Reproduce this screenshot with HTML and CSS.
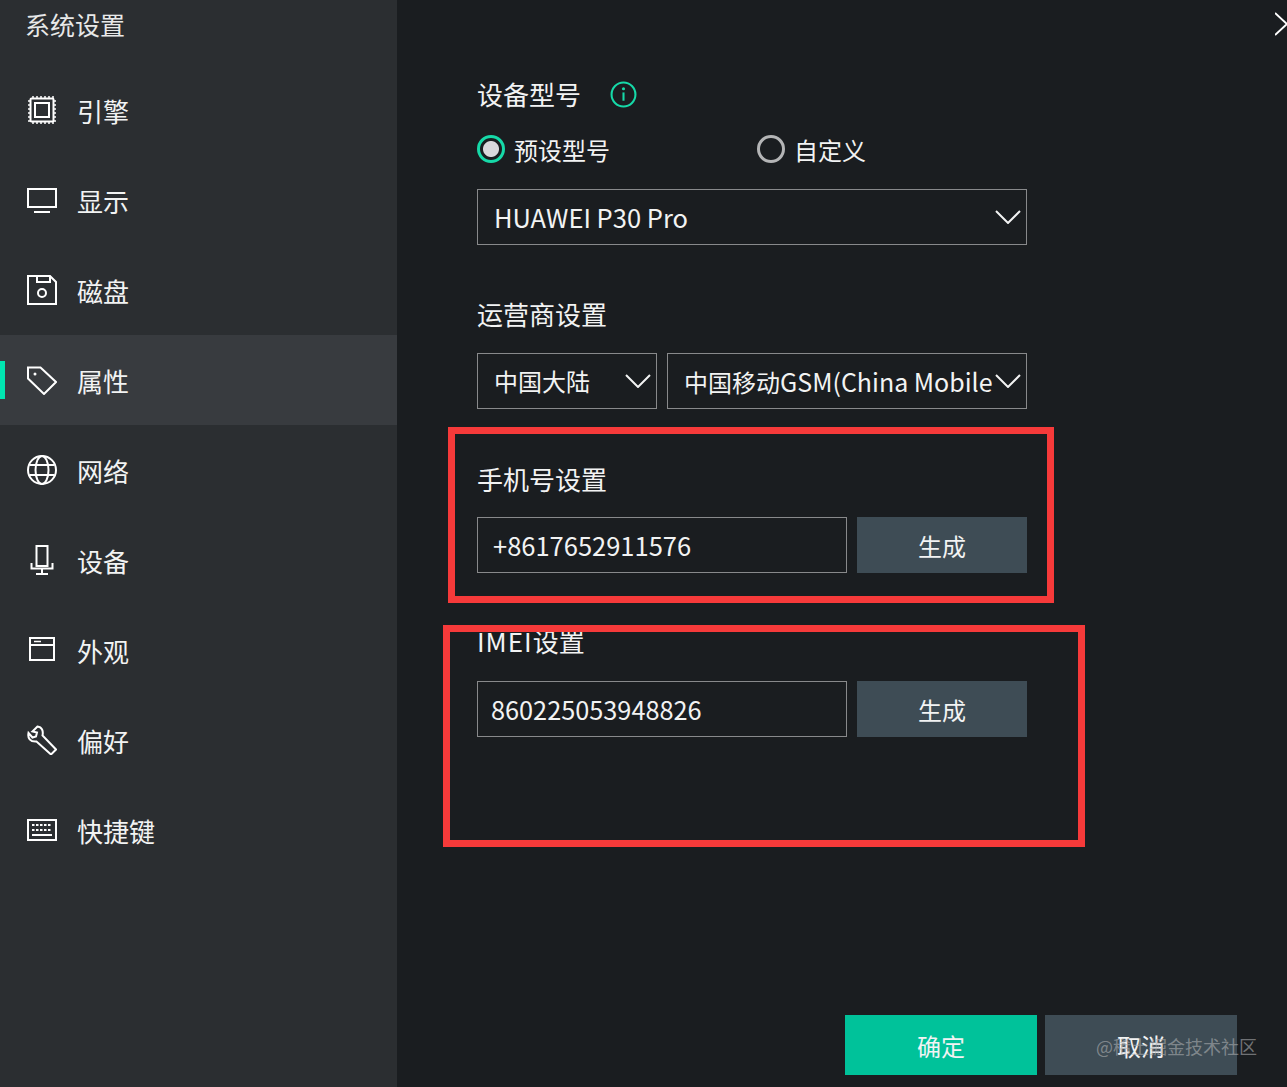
FILE: index.html
```html
<!DOCTYPE html>
<html lang="zh-CN">
<head>
<meta charset="utf-8">
<title>系统设置</title>
<link rel="stylesheet" href="styles.css">
</head>
<body>
<div class="app">
  <aside class="sidebar">
    <div class="side-title">系统设置</div>
    <nav class="nav">
      <div class="nav-item"><svg class="nav-icon" viewBox="0 0 30 30"><rect x="3.500" y="3.500" width="23" height="23" rx="1"/><rect x="8" y="8" width="14" height="14"/><path class="thin" d="M6 1v2M10 1v2M14 1v2M18 1v2M22 1v2M26 1v2M6 27v2M10 27v2M14 27v2M18 27v2M22 27v2M26 27v2M1 6h2M1 10h2M1 14h2M1 18h2M1 22h2M1 26h2M27 6h2M27 10h2M27 14h2M27 18h2M27 22h2M27 26h2"/></svg><span>引擎</span></div>
      <div class="nav-item"><svg class="nav-icon" viewBox="0 0 30 30"><rect x="1" y="4" width="28" height="18"/><path d="M7 27h16"/></svg><span>显示</span></div>
      <div class="nav-item"><svg class="nav-icon" viewBox="0 0 30 30"><path d="M1 1h22l6 6v22H1z"/><path d="M10 1v6h13V1"/><circle cx="15" cy="18" r="4"/></svg><span>磁盘</span></div>
      <div class="nav-item active"><svg class="nav-icon" viewBox="0 0 30 30"><path d="M1 2.500h12.500L29 17 17 29 1 13.500z"/><circle cx="8" cy="9" r="1.500" class="dot"/></svg><span>属性</span></div>
      <div class="nav-item"><svg class="nav-icon" viewBox="0 0 30 30"><circle cx="15" cy="15" r="14"/><ellipse cx="15" cy="15" rx="6.500" ry="14"/><path d="M2.500 10h25M2.500 20h25"/></svg><span>网络</span></div>
      <div class="nav-item"><svg class="nav-icon" viewBox="0 0 30 30"><rect x="9.500" y="1" width="11" height="20"/><path d="M4.500 18v5.500h21V18M15 23.500V29M9 29h12"/></svg><span>设备</span></div>
      <div class="nav-item"><svg class="nav-icon" viewBox="0 0 30 30"><rect x="3" y="3" width="24" height="22"/><path d="M3 10h24"/><path class="thin" d="M7 6.500h7"/></svg><span>外观</span></div>
      <div class="nav-item"><svg class="nav-icon" viewBox="0 0 30 30"><path d="M10.500 1.500l-5 5 4.500 1-1 4-3.500 1L1.500 8C.5 13 3 17 9.500 16.500L24 29.500l5-5-13.500-14C16.500 6 15 2 10.500 1.500z"/></svg><span>偏好</span></div>
      <div class="nav-item"><svg class="nav-icon" viewBox="0 0 30 30"><rect x="1" y="5" width="28" height="20"/><path d="M5 20h20"/><path class="dash" d="M5 10h20M5 15h20"/></svg><span>快捷键</span></div>
    </nav>
  </aside>

  <main class="panel">
    <svg class="close" viewBox="0 0 12 24"><path d="M0 1l12 11L0 23"/></svg>

    <section>
      <div class="label-row">
        <span class="label">设备型号</span>
        <svg class="info" viewBox="0 0 26 26"><circle cx="13" cy="13" r="11.500"/><path d="M13 11v8"/><circle class="info-dot" cx="13" cy="7.500" r="1.500"/></svg>
      </div>
      <div class="radios">
        <div class="radio-opt on"><i class="radio"></i><span>预设型号</span></div>
        <div class="radio-opt"><i class="radio"></i><span>自定义</span></div>
      </div>
      <div class="box select full"><span class="value">HUAWEI P30 Pro</span><svg class="chev" viewBox="0 0 26 14"><path d="M1 1l12 12L25 1"/></svg></div>
    </section>

    <section class="group-carrier">
      <div class="label">运营商设置</div>
      <div class="row">
        <div class="box select region"><span class="value cjk">中国大陆</span><svg class="chev" viewBox="0 0 26 14"><path d="M1 1l12 12L25 1"/></svg></div>
        <div class="box select carrier"><span class="value"><span class="cjk">中国移动</span>GSM(China Mobile)</span><svg class="chev" viewBox="0 0 26 14"><path d="M1 1l12 12L25 1"/></svg></div>
      </div>
    </section>

    <section class="group-phone">
      <div class="label">手机号设置</div>
      <div class="row">
        <div class="box field phone">+8617652911576</div>
        <div class="btn gen">生成</div>
      </div>
    </section>

    <section class="group-imei">
      <div class="label"><span class="latin-wide">IMEI</span>设置</div>
      <div class="row">
        <div class="box field imei">860225053948826</div>
        <div class="btn gen">生成</div>
      </div>
    </section>

    <footer class="actions">
      <div class="btn primary">确定</div>
      <div class="btn cancel">取消</div>
    </footer>

    <div class="mark mark-phone"></div>
    <div class="mark mark-imei"></div>
    <div class="watermark">@稀土掘金技术社区</div>
  </main>
</div>
</body>
</html>
```

FILE: styles.css
```css
* { box-sizing: border-box; }
html, body { margin: 0; height: 100%; overflow: hidden; }
body {
  font-family: "Noto Sans CJK SC", "Noto Sans", sans-serif;
  font-size: 26px;
  color: #f2f3f3;
  background: #1a1d20;
}
.app { display: flex; height: 1087px; }

.sidebar { width: 397px; flex: none; background: #2b2e31; }
.side-title { height: 65px; padding: 6px 0 0 25px; line-height: 36px; font-size: 25px; color: #e8e9e9; }
.nav-item {
  position: relative;
  display: flex;
  align-items: center;
  gap: 20px;
  height: 90px;
  padding-left: 27px;
  line-height: 36px;
}
.nav-item span { position: relative; top: 1px; }
.nav-item.active { background: #383b3f; }
.nav-item.active::before {
  content: "";
  position: absolute;
  left: 0;
  top: 26px;
  width: 5px;
  height: 38px;
  background: #00e5b0;
}
.nav-icon { width: 30px; height: 30px; flex: none; fill: none; stroke: #fff; stroke-width: 2; }
.nav-icon .thin { stroke-width: 1.500; }
.nav-icon .dot { fill: #fff; stroke: none; }
.nav-icon .dash { stroke-dasharray: 2.500 1.500; }

.panel { position: relative; flex: 1; display: flex; flex-direction: column; padding: 76px 50px 12px 80px; }
.close { position: absolute; right: 0; top: 12px; width: 12px; height: 24px; fill: none; stroke: #fff; stroke-width: 2; }

.label { line-height: 36px; color: #f2f3f3; }
.label-row { display: flex; align-items: center; gap: 29px; height: 36px; }
.info { width: 27px; height: 27px; fill: none; stroke: #16d9a8; stroke-width: 2; }
.info .info-dot { fill: #16d9a8; stroke: none; }
.latin-wide { letter-spacing: 1px; }

.radios { display: flex; margin-top: 19px; }
.radio-opt { display: flex; align-items: center; gap: 9px; line-height: 36px; width: 280px; font-size: 24px; }
.radio-opt span { position: relative; top: 1px; }
.radio {
  width: 28px;
  height: 28px;
  border-radius: 50%;
  border: 3px solid #b4b5b6;
}
.radio-opt.on .radio {
  border-color: #16d9a8;
  background: radial-gradient(circle, #d9d8dc 0 7.500px, transparent 8.500px);
}

.box { height: 56px; border: 1px solid #88898b; display: flex; align-items: center; line-height: 36px; font-size: 25.500px; }
.select { position: relative; padding: 0 5px 0 16px; gap: 2px; justify-content: space-between; overflow: hidden; }
.select .value { white-space: nowrap; overflow: hidden; flex: 1; min-width: 0; }
.cjk { font-size: 24px; }
.chev { width: 26px; height: 14px; flex: none; fill: none; stroke: #f2f3f3; stroke-width: 2; }
.full { width: 550px; margin-top: 22px; }
.row { display: flex; gap: 10px; }
.region { width: 180px; }
.carrier { width: 360px; font-size: 25px; }
.group-carrier { margin-top: 51px; }
.group-carrier .row { margin-top: 21px; }
.group-phone { margin-top: 52px; }
.group-phone .row { margin-top: 20px; }
.group-imei { margin-top: 50px; }
.group-imei .row { margin-top: 22px; }
.phone { width: 370px; padding-left: 15px; }
.imei { width: 370px; padding-left: 13px; font-size: 25.300px; }
.btn { display: flex; align-items: center; justify-content: center; color: #f2f3f3; font-size: 24px; }
.gen { width: 170px; height: 56px; background: #3e4c55; }

.actions { margin-top: auto; display: flex; justify-content: flex-end; gap: 8px; }
.actions .btn { width: 192px; height: 60px; }
.primary { background: #00c29a; }
.cancel { background: #3e4c55; }

.mark { position: absolute; border: 7px solid #f63a3a; pointer-events: none; }
.mark-phone { left: 51px; top: 427px; width: 606px; height: 176px; }
.mark-imei { left: 46px; top: 625px; width: 642px; height: 222px; }
.watermark {
  position: absolute;
  left: 699px;
  top: 1032px;
  font-size: 18px;
  line-height: 28px;
  white-space: nowrap;
  color: rgba(170, 172, 175, 0.62);
}
```
